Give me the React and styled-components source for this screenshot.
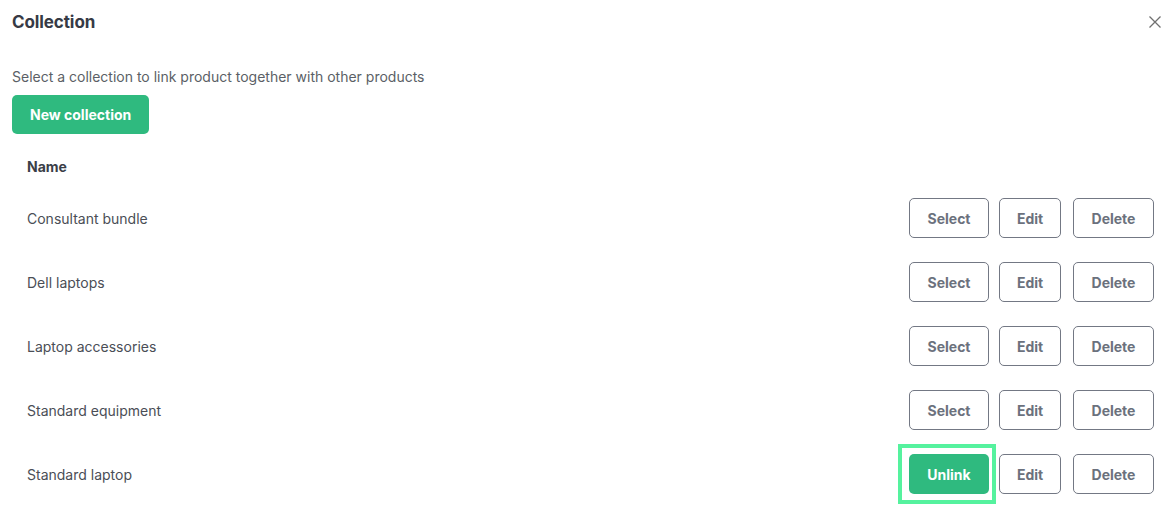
import React from "react";
import styled, { createGlobalStyle } from "styled-components";

const Global = createGlobalStyle`
  html, body { margin: 0; padding: 0; background: #ffffff; }
  body { font-family: Inter, "Noto Sans", "Liberation Sans", sans-serif; -webkit-font-smoothing: antialiased; }
`;

const Dialog = styled.div`
  box-sizing: border-box;
  width: 1173px;
  padding: 0 12px 0 12px;
  display: flex;
  flex-direction: column;
`;

const Header = styled.div`
  height: 44px;
  display: flex;
  align-items: center;
  justify-content: space-between;
`;

const Title = styled.h2`
  margin: 0;
  font-size: 17px;
  font-weight: 700;
  color: #363a45;
  letter-spacing: -0.1px;
`;

const CloseButton = styled.button`
  border: none;
  background: none;
  padding: 0;
  width: 12px;
  height: 12px;
  margin-right: 0;
  display: flex;
  color: #707070;
  cursor: pointer;
`;

const Body = styled.div`
  padding-top: 23px;
  display: flex;
  flex-direction: column;
`;

const Description = styled.p`
  margin: 0;
  font-size: 14px;
  line-height: 20px;
  color: #5b5f66;
`;

const PrimaryButton = styled.button`
  align-self: flex-start;
  margin-top: 8px;
  height: 39px;
  padding: 0 18px;
  border: none;
  border-radius: 5px;
  background: #2fba7f;
  color: #ffffff;
  font-family: inherit;
  font-size: 14px;
  font-weight: 700;
  cursor: pointer;
`;

const Table = styled.div`
  margin-top: 12px;
  display: flex;
  flex-direction: column;
`;

const HeadRow = styled.div`
  height: 40px;
  padding: 0 15px;
  display: flex;
  align-items: center;
  font-size: 14px;
  font-weight: 700;
  color: #3a3e47;
`;

const Row = styled.div`
  height: 64px;
  padding: 0 7px 0 15px;
  display: flex;
  align-items: center;
  justify-content: space-between;
`;

const NameCell = styled.span`
  font-size: 14px;
  color: #4a4e56;
`;

const Actions = styled.div`
  display: flex;
  align-items: center;
  gap: 10px;
`;

const OutlineButton = styled.button`
  box-sizing: border-box;
  height: 40px;
  width: ${(p) => p.$w}px;
  margin-left: ${(p) => p.$ml || 0}px;
  border: 1px solid #737884;
  border-radius: 5px;
  background: #ffffff;
  color: #6b717d;
  font-family: inherit;
  font-size: 14px;
  font-weight: 700;
  cursor: pointer;
`;

const UnlinkWrap = styled.div`
  position: relative;
  display: flex;
`;

const UnlinkButton = styled.button`
  height: 40px;
  width: 80px;
  border: none;
  border-radius: 5px;
  background: #2fba7f;
  color: #ffffff;
  font-family: inherit;
  font-size: 14px;
  font-weight: 700;
  cursor: pointer;
`;

const Highlight = styled.span`
  position: absolute;
  left: -11px;
  right: -7px;
  top: -10px;
  bottom: -10px;
  border: 4px solid #55f29e;
  pointer-events: none;
`;

const rows = [
  { name: "Consultant bundle", linked: false },
  { name: "Dell laptops", linked: false },
  { name: "Laptop accessories", linked: false },
  { name: "Standard equipment", linked: false },
  { name: "Standard laptop", linked: true },
];

export default function App() {
  return (
    <>
      <Global />
      <Dialog>
        <Header>
          <Title>Collection</Title>
          <CloseButton aria-label="Close">
            <svg width="12" height="12" viewBox="0 0 12 12" fill="none">
              <path d="M0.5 0.5L11.5 11.5M11.5 0.5L0.5 11.5" stroke="currentColor" strokeWidth="1.3" />
            </svg>
          </CloseButton>
        </Header>
        <Body>
          <Description>Select a collection to link product together with other products</Description>
          <PrimaryButton>New collection</PrimaryButton>
          <Table>
            <HeadRow>Name</HeadRow>
            {rows.map((r) => (
              <Row key={r.name}>
                <NameCell>{r.name}</NameCell>
                <Actions>
                  {r.linked ? (
                    <UnlinkWrap>
                      <UnlinkButton>Unlink</UnlinkButton>
                      <Highlight />
                    </UnlinkWrap>
                  ) : (
                    <OutlineButton $w={80}>Select</OutlineButton>
                  )}
                  <OutlineButton $w={62}>Edit</OutlineButton>
                  <OutlineButton $w={81} $ml={2}>Delete</OutlineButton>
                </Actions>
              </Row>
            ))}
          </Table>
        </Body>
      </Dialog>
    </>
  );
}
